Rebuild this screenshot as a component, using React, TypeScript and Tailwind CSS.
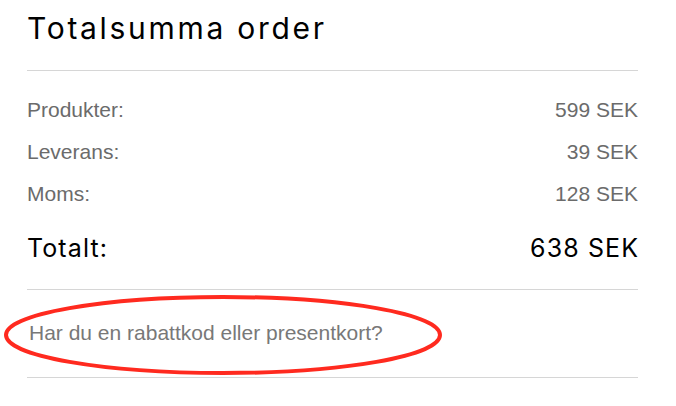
const rows = [
  { label: "Produkter:", value: "599 SEK" },
  { label: "Leverans:", value: "39 SEK" },
  { label: "Moms:", value: "128 SEK" },
];

export default function App() {
  return (
    <div className="relative w-[676px] h-[406px] overflow-hidden bg-white">
      <div className="pl-[27px] pr-[38px] pt-[11px]">
        <h2 className="font-['Inter',sans-serif] text-[30px] leading-[34px] font-normal text-black tracking-[2.7px]">
          Totalsumma order
        </h2>
        <div className="mt-[25px] h-px bg-[#d6d6d6]" />

        <div className="mt-[18px] font-['Liberation_Sans',Arial,sans-serif] text-[21px] text-[#6b6b6b]">
          {rows.map((r) => (
            <div key={r.label} className="flex justify-between leading-[42px]">
              <span>{r.label}</span>
              <span>{r.value}</span>
            </div>
          ))}
        </div>

        <div className="mt-[18px] flex justify-between font-['Inter',sans-serif] text-[25px] leading-[30px] text-black tracking-[1.1px]">
          <span>Totalt:</span>
          <span className="-mr-[1.1px]">638 SEK</span>
        </div>

        <div className="mt-[26px] h-px bg-[#d6d6d6]" />

        <button className="mt-[22px] block pl-[2px] font-['Liberation_Sans',Arial,sans-serif] text-[21px] leading-[41px] text-[#787878]">
          Har du en rabattkod eller presentkort?
        </button>

        <div className="mt-[24px] h-px bg-[#d6d6d6]" />
      </div>

      {/* annotation */}
      <svg className="absolute left-0 top-0 pointer-events-none" width="676" height="406">
        <ellipse cx="223" cy="335" rx="217" ry="38" fill="none" stroke="#ff2a1f" strokeWidth="4" />
      </svg>
    </div>
  );
}
